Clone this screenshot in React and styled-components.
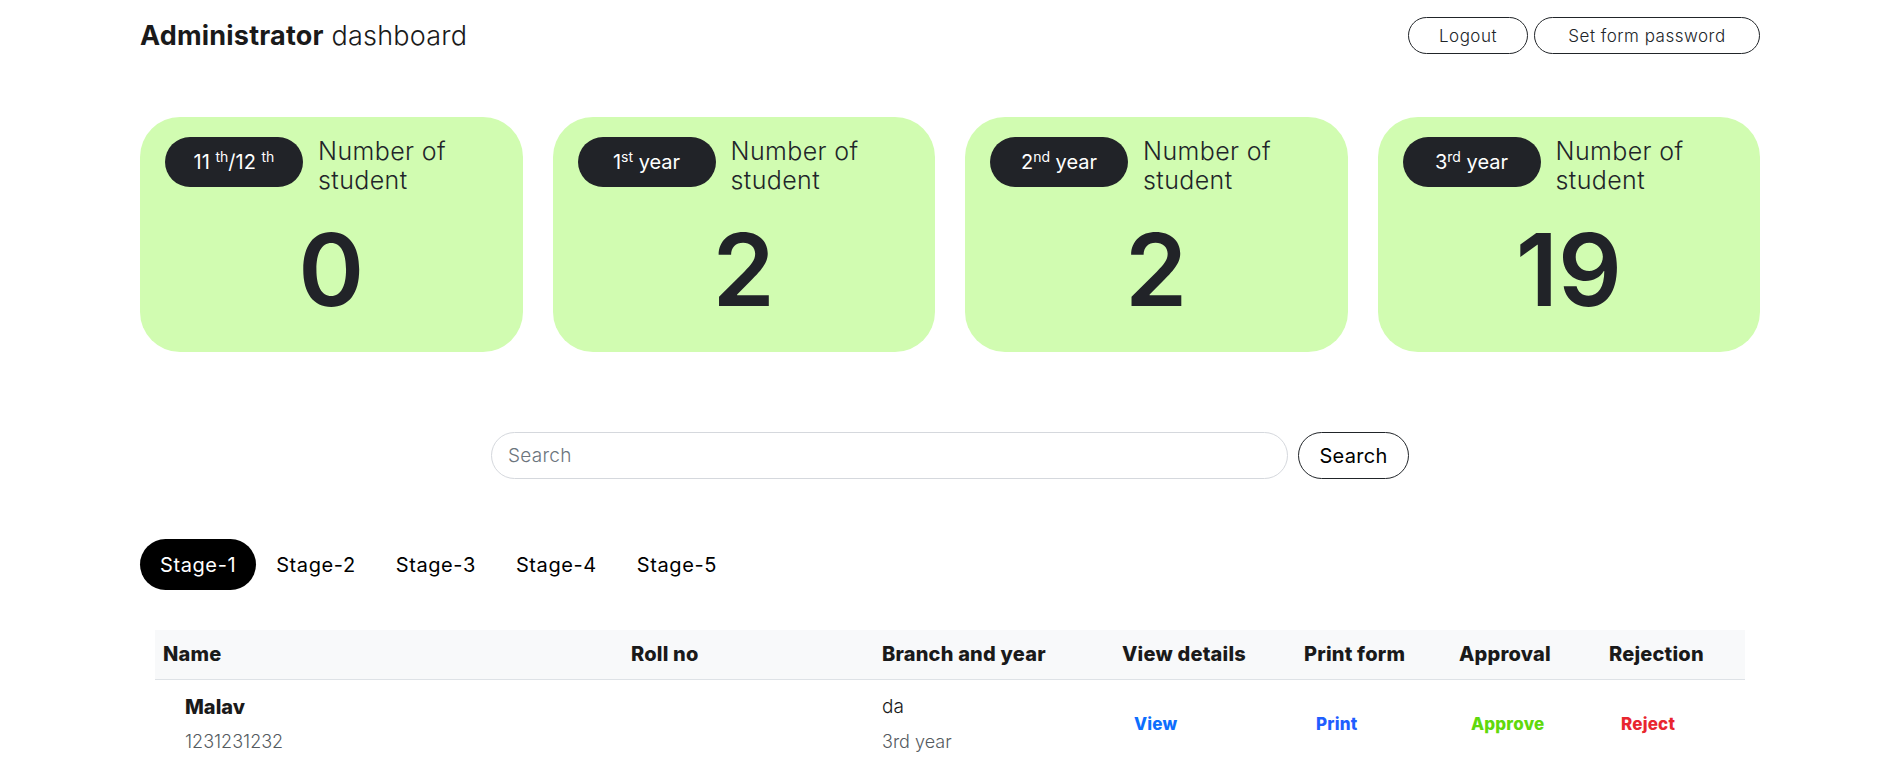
import styled, { createGlobalStyle } from "styled-components";

const stats = [
    { id: "school", label: <>11 <sup>th</sup>/12 <sup>th</sup></>, count: 0 },
    { id: "first", label: <>1<sup>st</sup> year</>, count: 2 },
    { id: "second", label: <>2<sup>nd</sup> year</>, count: 2 },
    { id: "third", label: <>3<sup>rd</sup> year</>, count: 19 },
];

const stages = ["Stage-1", "Stage-2", "Stage-3", "Stage-4", "Stage-5"];

const columns = [
    { title: "Name", width: 468 },
    { title: "Roll no", width: 251 },
    { title: "Branch and year", width: 240 },
    { title: "View details", width: 182 },
    { title: "Print form", width: 155 },
    { title: "Approval", width: 150 },
    { title: "Rejection", width: 144 },
];

const students = [
    { id: 1, name: "Malav", phone: "1231231232", roll: "", branch: "da", year: "3rd year" },
];

const App = () => {
    return (
        <>
            <GlobalStyle />
            <Page>
                <Header>
                    <Title><b>Administrator</b> dashboard</Title>
                    <HeaderActions>
                        <OutlineButton $wide={120}>Logout</OutlineButton>
                        <OutlineButton $wide={226}>Set form password</OutlineButton>
                    </HeaderActions>
                </Header>

                <StatGrid>
                    {stats.map(stat => (
                        <StatCard key={stat.id}>
                            <StatTop>
                                <Badge><span>{stat.label}</span></Badge>
                                <StatLabel>Number of student</StatLabel>
                            </StatTop>
                            <StatCount>{stat.count}</StatCount>
                        </StatCard>
                    ))}
                </StatGrid>

                <SearchRow>
                    <SearchInput placeholder="Search" />
                    <SearchButton>Search</SearchButton>
                </SearchRow>

                <Tabs>
                    {stages.map((stage, i) => (
                        <Tab key={stage} $active={i === 0}>{stage}</Tab>
                    ))}
                </Tabs>

                <TableWrap>
                    <Table>
                        <thead>
                            <tr>
                                {columns.map(col => (
                                    <Th key={col.title} style={{ width: col.width }}>{col.title}</Th>
                                ))}
                            </tr>
                        </thead>
                        <tbody>
                            {students.map(s => (
                                <tr key={s.id}>
                                    <NameCell>
                                        <Strong>{s.name}</Strong>
                                        <Muted>{s.phone}</Muted>
                                    </NameCell>
                                    <Td>{s.roll}</Td>
                                    <Td>
                                        <Plain>{s.branch}</Plain>
                                        <Muted>{s.year}</Muted>
                                    </Td>
                                    <Td><LinkButton $color="#0d6efd">View</LinkButton></Td>
                                    <Td><LinkButton $color="#1f5eff">Print</LinkButton></Td>
                                    <Td><LinkButton $color="#5fd90c">Approve</LinkButton></Td>
                                    <Td><LinkButton $color="#e8262f">Reject</LinkButton></Td>
                                </tr>
                            ))}
                        </tbody>
                    </Table>
                </TableWrap>
            </Page>
        </>
    );
}

export default App;

const GlobalStyle = createGlobalStyle`
    body {
        margin: 0;
        background: #fff;
        color: #212529;
        font-family: Inter, "Open Sans", sans-serif;
    }
    * {
        box-sizing: border-box;
    }
`;

const Page = styled.div`
    width: 1620px;
    margin-left: 140px;
    padding-top: 17px;
`;

const Header = styled.header`
    display: flex;
    align-items: center;
    justify-content: space-between;
    height: 37px;
`;

const Title = styled.h3`
    margin: 0;
    font-size: 27px;
    font-weight: 300;
    color: #1a1a1a;
    letter-spacing: 0.2px;

    b {
        font-weight: 700;
    }
`;

const HeaderActions = styled.div`
    display: flex;
    gap: 6px;
`;

const OutlineButton = styled.button`
    width: ${({ $wide }) => $wide}px;
    height: 37px;
    border: 1px solid #212529;
    border-radius: 50px;
    background: #fff;
    color: #212529;
    font-family: inherit;
    font-size: 17px;
    font-weight: 300;
    letter-spacing: 0.5px;
    padding: 0;
`;

const StatGrid = styled.div`
    display: grid;
    grid-template-columns: repeat(4, 1fr);
    gap: 30px;
    margin-top: 63px;
`;

const StatCard = styled.div`
    display: flex;
    flex-direction: column;
    height: 235px;
    padding: 20px 25px;
    background: #d1fcb1;
    border-radius: 40px;
`;

const StatTop = styled.div`
    display: flex;
    align-items: flex-start;
    gap: 15px;
`;

const Badge = styled.div`
    display: flex;
    align-items: center;
    justify-content: center;
    flex: none;
    width: 138px;
    height: 50px;
    border-radius: 50px;
    background: #212328;
    color: #fff;
    font-size: 20px;
    font-weight: 400;
    white-space: pre;

    sup {
        font-size: 14px;
        line-height: 0;
        vertical-align: 7px;
    }
`;

const StatLabel = styled.h4`
    margin: 0;
    width: 160px;
    font-size: 25px;
    font-weight: 300;
    letter-spacing: 0.4px;
    line-height: 29px;
    color: #212529;
`;

const StatCount = styled.div`
    flex: 1;
    display: flex;
    align-items: center;
    justify-content: center;
    padding-top: 12px;
    font-size: 100px;
    font-weight: 600;
    line-height: 1;
    color: #212328;
`;

const SearchRow = styled.div`
    display: flex;
    justify-content: center;
    gap: 10px;
    margin-top: 80px;
`;

const SearchInput = styled.input`
    width: 797px;
    height: 47px;
    padding: 0 16px;
    border: 1px solid #d5d8dd;
    border-radius: 50px;
    font-family: inherit;
    font-size: 19px;
    font-weight: 300;
    letter-spacing: 0.3px;
    color: #212529;
    outline: none;

    &::placeholder {
        color: #6c757d;
    }
`;

const SearchButton = styled.button`
    width: 111px;
    height: 47px;
    padding: 0;
    border: 1px solid #212529;
    border-radius: 50px;
    background: #fff;
    color: #000;
    font-family: inherit;
    font-size: 20px;
    font-weight: 400;
    letter-spacing: 0.3px;
`;

const Tabs = styled.nav`
    display: flex;
    margin-top: 60px;
`;

const Tab = styled.button`
    height: 51px;
    padding: 0 20px;
    border: 0;
    border-radius: 50px;
    background: ${({ $active }) => ($active ? "#000" : "transparent")};
    color: ${({ $active }) => ($active ? "#fff" : "#000")};
    font-family: inherit;
    font-size: 20px;
    font-weight: 400;
    letter-spacing: 0.6px;
`;

const TableWrap = styled.div`
    margin: 40px 15px 0;
`;

const Table = styled.table`
    width: 100%;
    border-collapse: collapse;
    table-layout: fixed;
`;

const Th = styled.th`
    height: 49px;
    padding: 0 8px;
    background: #f8f9fa;
    border-bottom: 1px solid #dee2e6;
    text-align: left;
    font-size: 20px;
    font-weight: 800;
    letter-spacing: 0.2px;
    color: #1a1a1a;
    white-space: nowrap;
`;

const Td = styled.td`
    padding: 12px 8px 10px;
    vertical-align: middle;
`;

const NameCell = styled(Td)`
    padding-left: 30px;
`;

const Strong = styled.div`
    font-size: 20px;
    font-weight: 800;
    line-height: 30px;
    color: #1a1a1a;
`;

const Plain = styled.div`
    font-size: 19px;
    font-weight: 300;
    line-height: 30px;
    color: #1a1a1a;
`;

const Muted = styled.div`
    margin-top: 5px;
    font-size: 18px;
    font-weight: 300;
    line-height: 30px;
    color: #555b61;
`;

const LinkButton = styled.button`
    padding: 6px 12px;
    border: 0;
    background: none;
    color: ${({ $color }) => $color};
    font-family: inherit;
    font-size: 17px;
    font-weight: 800;
    letter-spacing: 0.2px;
`;
